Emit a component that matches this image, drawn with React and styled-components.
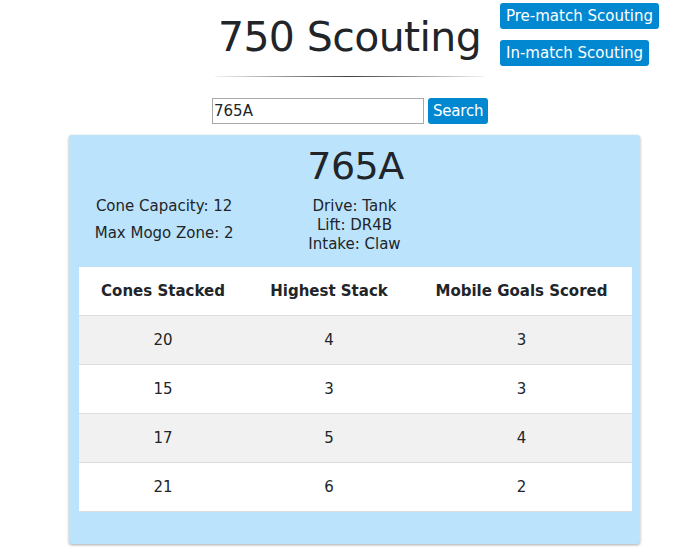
import React from "react";
import styled, { createGlobalStyle } from "styled-components";

const GlobalStyle = createGlobalStyle`
  html, body { margin: 0; padding: 0; background: #ffffff; }
  body {
    font-family: "DejaVu Sans", "Noto Sans", sans-serif;
    color: #212529;
    font-size: 16px;
  }
`;

const Page = styled.div`
  width: 679px;
  height: 547px;
  overflow: hidden;
`;

const Header = styled.header`
  display: flex;
  padding-left: 215px;
`;

const TitleBlock = styled.div`
  width: 269px;
  display: flex;
  flex-direction: column;
  align-items: center;
`;

const Title = styled.h1`
  margin: 12px 0 0;
  font-size: 41px;
  font-weight: 400;
  line-height: 50px;
  letter-spacing: -0.6px;
`;

const Rule = styled.div`
  width: 269px;
  height: 1px;
  margin-top: 14px;
  background: linear-gradient(to right, rgba(0,0,0,0.05), rgba(0,0,0,0.75) 50%, rgba(0,0,0,0.05));
`;

const NavColumn = styled.div`
  display: flex;
  flex-direction: column;
  align-items: flex-start;
  gap: 11px;
  margin-left: 16px;
  padding-top: 3px;
`;

const BlueButton = styled.button`
  background: #0288d1;
  color: #ffffff;
  border: none;
  border-radius: 3px;
  font-family: inherit;
  font-size: 15px;
  height: 26px;
  padding: 0 ${(p) => p.$px ?? 6}px;
  letter-spacing: ${(p) => p.$ls ?? 0}px;
  cursor: pointer;
`;

const SearchRow = styled.form`
  display: flex;
  align-items: center;
  gap: 4px;
  margin: 21px 0 0 212px;
`;

const SearchInput = styled.input`
  box-sizing: border-box;
  width: 212px;
  height: 26px;
  border: 1px solid #a9a9a9;
  padding: 0 1px;
  font-family: inherit;
  font-size: 15px;
  color: #212529;
`;

const Panel = styled.section`
  box-sizing: border-box;
  margin: 11px 0 0 69px;
  width: 571px;
  height: 409px;
  background: #bce3fc;
  border-radius: 3px;
  box-shadow: 0 1px 3px rgba(0, 0, 0, 0.35);
  padding: 8px 8px 0 10px;
`;

const TeamName = styled.h2`
  margin: 0;
  text-align: center;
  font-size: 38px;
  font-weight: 400;
  line-height: 46px;
  letter-spacing: -0.5px;
`;

const InfoGrid = styled.div`
  display: grid;
  grid-template-columns: repeat(3, 1fr);
  margin: 8px -8px 0 -10px;
`;

const InfoCol = styled.div`
  text-align: center;
  font-size: 15px;
  line-height: 19px;
`;

const InfoLine = styled.p`
  margin: 0 0 ${(p) => p.$gap || 0}px;
`;

const Table = styled.table`
  width: 553px;
  margin-top: 13px;
  border-collapse: collapse;
  background: #ffffff;
  table-layout: fixed;
`;

const HeadCell = styled.th`
  height: 48px;
  padding: 0;
  font-size: 15px;
  font-weight: 700;
  text-align: center;
  border-bottom: 1px solid #dddddd;
`;

const Row = styled.tr`
  background: ${(p) => (p.$striped ? "#f1f1f1" : "#ffffff")};
`;

const Cell = styled.td`
  height: 48px;
  padding: 0;
  font-size: 15px;
  text-align: center;
  border-bottom: 1px solid #dddddd;
`;

const stats = [
  [20, 4, 3],
  [15, 3, 3],
  [17, 5, 4],
  [21, 6, 2],
];

export default function App() {
  return (
    <Page>
      <GlobalStyle />
      <Header>
        <TitleBlock>
          <Title>750 Scouting</Title>
          <Rule />
        </TitleBlock>
        <NavColumn>
          <BlueButton>Pre-match Scouting</BlueButton>
          <BlueButton>In-match Scouting</BlueButton>
        </NavColumn>
      </Header>
      <SearchRow onSubmit={(e) => e.preventDefault()}>
        <SearchInput defaultValue="765A" />
        <BlueButton $px={5} $ls={-0.2}>Search</BlueButton>
      </SearchRow>
      <Panel>
        <TeamName>765A</TeamName>
        <InfoGrid>
          <InfoCol>
            <InfoLine $gap={8}>Cone Capacity: 12</InfoLine>
            <InfoLine>Max Mogo Zone: 2</InfoLine>
          </InfoCol>
          <InfoCol>
            <InfoLine>Drive: Tank</InfoLine>
            <InfoLine>Lift: DR4B</InfoLine>
            <InfoLine>Intake: Claw</InfoLine>
          </InfoCol>
          <InfoCol />
        </InfoGrid>
        <Table>
          <colgroup>
            <col style={{ width: "168px" }} />
            <col style={{ width: "164px" }} />
            <col />
          </colgroup>
          <thead>
            <tr>
              <HeadCell>Cones Stacked</HeadCell>
              <HeadCell>Highest Stack</HeadCell>
              <HeadCell>Mobile Goals Scored</HeadCell>
            </tr>
          </thead>
          <tbody>
            {stats.map((r, i) => (
              <Row key={i} $striped={i % 2 === 0}>
                {r.map((v, j) => (
                  <Cell key={j}>{v}</Cell>
                ))}
              </Row>
            ))}
          </tbody>
        </Table>
      </Panel>
    </Page>
  );
}
